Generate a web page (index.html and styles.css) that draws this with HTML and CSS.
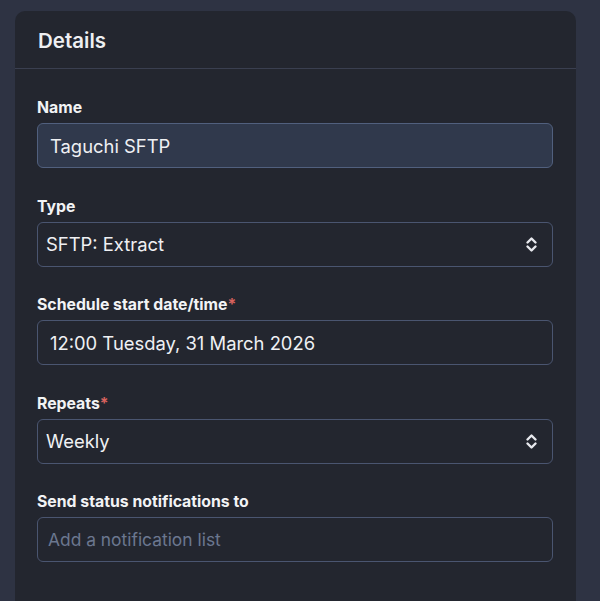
FILE: index.html
```html
<!DOCTYPE html>
<html>
<head>
<meta charset="utf-8">
<link rel="stylesheet" href="styles.css">
</head>
<body>
<div class="card">
  <div class="card-header">Details</div>
  <div class="card-body">
    <div class="field">
      <label class="label">Name</label>
      <div class="input focused">Taguchi SFTP</div>
    </div>
    <div class="field">
      <label class="label">Type</label>
      <div class="input select">SFTP: Extract
        <svg class="chev" width="13" height="19" viewBox="0 0 13 19"><path d="M2.5 7.5 L6.5 3.5 L10.5 7.5 M2.5 11.5 L6.5 15.5 L10.5 11.5" fill="none" stroke="#e8e9ee" stroke-width="2.4" stroke-linecap="round" stroke-linejoin="round"/></svg>
      </div>
    </div>
    <div class="field">
      <label class="label">Schedule start date/time<span class="req">*</span></label>
      <div class="input">12:00 Tuesday, 31 March 2026</div>
    </div>
    <div class="field">
      <label class="label">Repeats<span class="req">*</span></label>
      <div class="input select">Weekly
        <svg class="chev" width="13" height="19" viewBox="0 0 13 19"><path d="M2.5 7.5 L6.5 3.5 L10.5 7.5 M2.5 11.5 L6.5 15.5 L10.5 11.5" fill="none" stroke="#e8e9ee" stroke-width="2.4" stroke-linecap="round" stroke-linejoin="round"/></svg>
      </div>
    </div>
    <div class="field">
      <label class="label">Send status notifications to</label>
      <div class="input placeholder">Add a notification list</div>
    </div>
  </div>
</div>
</body>
</html>
```
FILE: styles.css
```css
html, body {
  margin: 0;
  padding: 0;
  background: #2e3343;
  font-family: Inter, "Open Sans", sans-serif;
  color: #eeeff2;
  height: 601px;
  overflow: hidden;
}
.card {
  margin: 11px 24px 0 15px;
  background: #23262f;
  border-radius: 10px 10px 0 0;
  height: 620px;
}
.card-header {
  height: 58px;
  box-sizing: border-box;
  padding: 17px 23px 0;
  font-size: 20.5px;
  font-weight: 600;
  line-height: 26px;
  border-bottom: 1px solid #3a3f50;
}
.card-body {
  padding: 29px 23px 0 22px;
  display: flex;
  flex-direction: column;
  gap: 28.5px;
}
.field {
  display: flex;
  flex-direction: column;
  gap: 5px;
}
.label {
  font-size: 15.8px;
  font-weight: 700;
  line-height: 20px;
  color: #f2f3f5;
}
.req {
  color: #d9625e;
}
.input {
  height: 45px;
  box-sizing: border-box;
  border: 1.5px solid #4a5570;
  border-radius: 6px;
  padding: 0 12px;
  display: flex;
  align-items: center;
  font-size: 18.4px;
  color: #eff0f3;
}
.input.focused {
  background: #30394c;
  border-color: #51607e;
}
.input.select {
  padding-left: 8px;
  justify-content: space-between;
  padding-right: 14px;
}
.input.placeholder {
  padding-left: 10px;
  color: #6b778f;
  font-size: 17.4px;
}
.chev {
  display: block;
}
```
